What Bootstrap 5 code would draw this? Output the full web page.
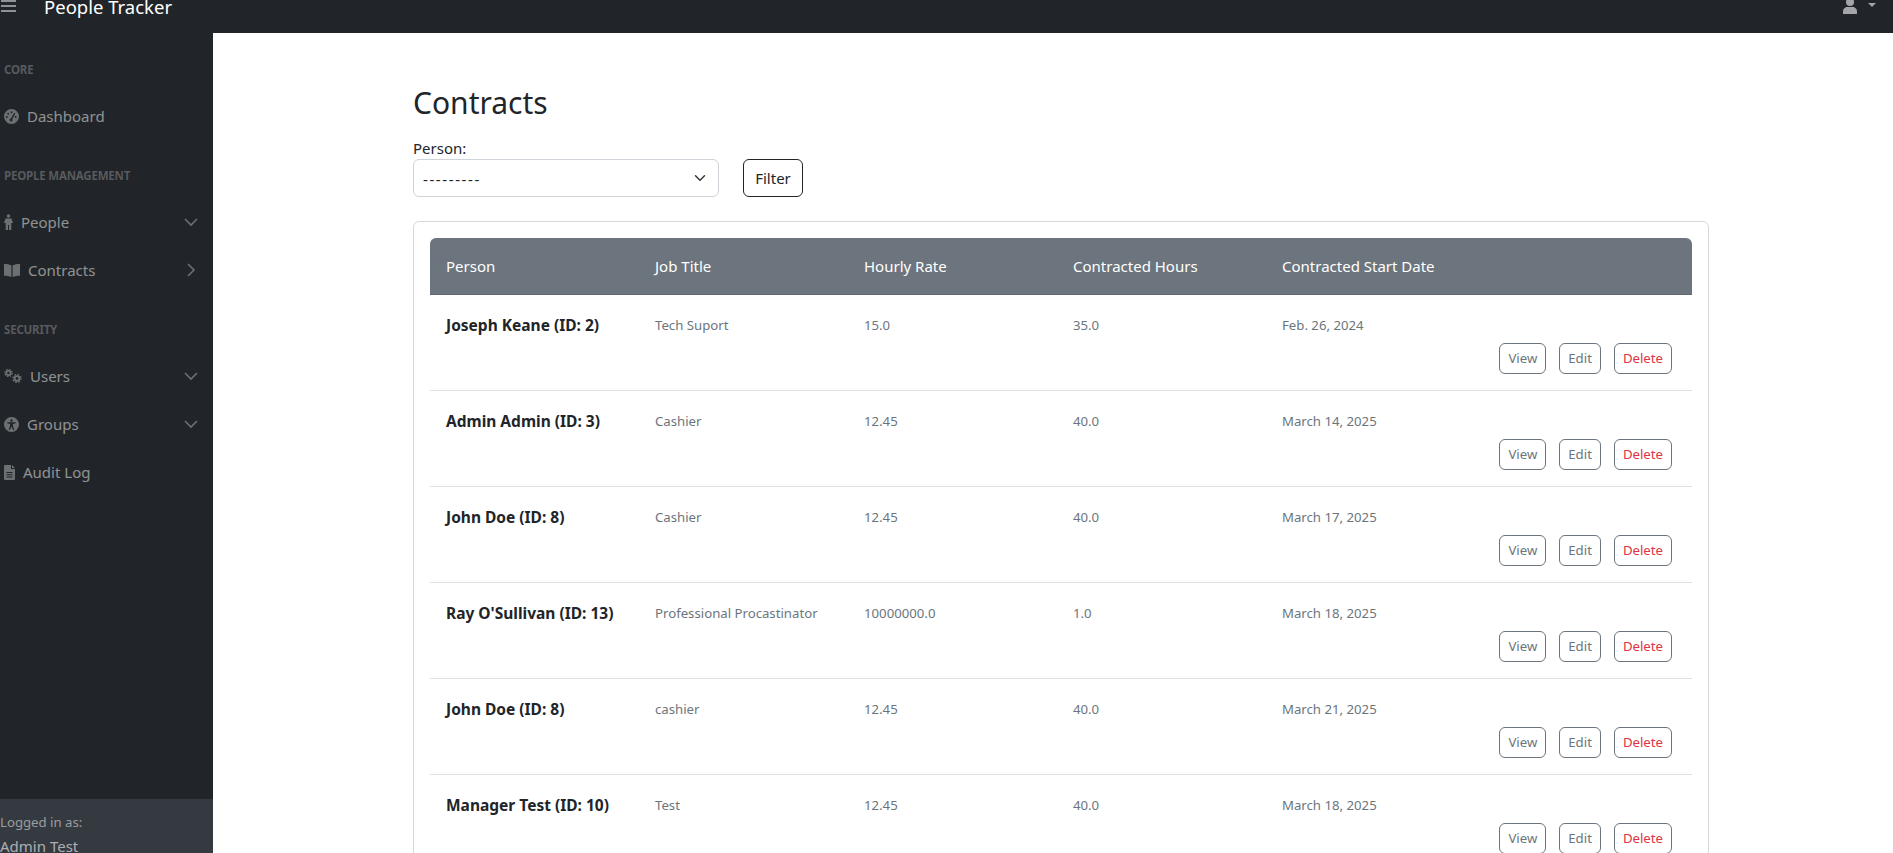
<!DOCTYPE html>
<html lang="en">
  <head>
    <meta charset="UTF-8" />
    <meta name="viewport" content="width=device-width, initial-scale=1.0" />
    <link href="https://cdn.jsdelivr.net/npm/bootstrap@5.3.2/dist/css/bootstrap.min.css" rel="stylesheet" />
    <title>Contracts</title>
    <style>
      html, body { height: 100%; overflow: hidden; }
      body { font-family: "Noto Sans", "Open Sans", sans-serif; font-size: 15px; color: #212529; background: #fff; }
      .top-bar { height: 33px; background: #212529; padding: 0; align-items: flex-start; flex-wrap: nowrap; }
      .burger { width: 15px; margin: 0 0 0 1px; display: flex; flex-direction: column; gap: 3px; padding-top: 0; }
      .burger span { display: block; height: 2px; background: #8f9296; }
      .brand { color: #fff; font-size: 18.5px; line-height: 22px; margin: -4px 0 0 28px; }
      .user-menu { margin: 0 17px 0 auto; gap: 11px; }
      .user-caret { width: 0; height: 0; border-top: 4.5px solid #a3a5a8; border-left: 4.5px solid transparent; border-right: 4.5px solid transparent; margin-top: 3px; }
      .shell { height: calc(100vh - 33px); }
      .side { width: 213px; flex: none; background: #212529; }
      .side-nav { padding-top: 1px; }
      .side-head { font-size: 11.5px; font-weight: 700; color: rgba(255,255,255,.25); text-transform: uppercase; padding: 0 4px; line-height: 16px; letter-spacing: -.2px; margin: 28px 0 14px; }
      .side-item { color: rgba(255,255,255,.5); height: 48px; padding: 0 15px 0 4px; font-size: 15px; text-decoration: none; gap: 8px; }
      .side-item svg.ic { fill: #6d7073; flex: none; }
      .side-item svg.chev { margin-left: auto; stroke: #6d7073; fill: none; stroke-width: 1.6; flex: none; }
      .side-foot { background: #343a40; color: rgba(255,255,255,.5); height: 54px; padding: 12px 0 0 0; font-size: 13.2px; line-height: 22px; }
      .side-foot div + div { font-size: 15px; line-height: 14px; margin-top: 6px; color: rgba(255,255,255,.6); }
      .main-area { min-width: 0; padding: 0 184px 0 200px; overflow: hidden; }
      .page-title { font-size: 30px; font-weight: 400; line-height: 38px; margin: 51px 0 16px; }
      .filter-label { display: block; font-size: 15px; line-height: 20px; margin-bottom: 1px; color: #212529; }
      .filter-select { width: 306px; height: 38px; font-size: 15px; padding: 7px 9px 5px; border-color: #ced4da; background-position: right 10px center; color: #212529; letter-spacing: 1.6px; }
      .filter-btn { height: 38px; width: 60px; font-size: 15px; padding: 1px 0 0; border-color: #212529; color: #212529; margin-left: 24px; }
      .list-card { margin-top: 24px; padding: 16px 16px 0; border-color: #d5d7d9; border-radius: 6px; }
      .contract-table { table-layout: fixed; margin: 0; width: 100%; }
      .contract-table thead th { background: #6c757d; color: #fff; font-weight: 400; font-size: 15px; height: 56px; padding: 1px 16px 0; vertical-align: middle; border-bottom: 1px solid #5f676e; width: 209px; }
      .contract-table thead th:first-child { border-top-left-radius: 6px; }
      .contract-table thead th:last-child { border-top-right-radius: 6px; width: auto; }
      .contract-table td { height: 96px; padding: 19px 16px 0; vertical-align: top; font-size: 13.2px; line-height: 22px; color: #6c757d; border-bottom: 1px solid #dee2e6; }
      .contract-table td.who { font-weight: 700; font-size: 15.5px; padding-right: 0; color: #212529; white-space: nowrap; }
      .contract-table td.acts { padding: 48px 20px 0 0; }
      .row-actions { gap: 13px; }
      .row-btn { height: 31px; font-size: 13.2px; padding: 0 8px; border-color: #6c757d; color: #6c757d; line-height: 29px; }
      .row-btn.del { color: #dc3545; }
    </style>
  </head>

  <body>
    <nav class="navbar top-bar d-flex">
      <div class="burger"><span></span><span></span><span></span></div>
      <a class="brand text-decoration-none" href="#">People Tracker</a>
      <div class="user-menu d-flex">
        <svg width="14" height="14" viewBox="0 0 14 14" fill="#a3a5a8"><circle cx="7" cy="2" r="4"/><path d="M0 14v-2.500c0-3 2.500-4.500 4-4.500h6c1.500 0 4 1.500 4 4.500V14z"/></svg>
        <span class="user-caret"></span>
      </div>
    </nav>

    <div class="shell d-flex">
      <aside class="side d-flex flex-column">
        <div class="side-nav flex-grow-1">
          <div class="side-head">Core</div>
          <a class="side-item d-flex align-items-center" href="#">
            <svg class="ic" width="15" height="15" viewBox="0 0 16 16"><path fill-rule="evenodd" d="M8 0a8 8 0 1 1 0 16A8 8 0 0 1 8 0zM8 2.500a1 1 0 1 0 0 2 1 1 0 0 0 0-2zM4.500 4a1 1 0 1 0 0 2 1 1 0 0 0 0-2zM3 7.500a1 1 0 1 0 0 2 1 1 0 0 0 0-2zM12.500 7.500a1 1 0 1 0 0 2 1 1 0 0 0 0-2zM11 4l-3.700 6a1.600 1.600 0 1 0 1.500.6L12 5z"/></svg>
            Dashboard
          </a>
          <div class="side-head">People Management</div>
          <a class="side-item d-flex align-items-center" href="#">
            <svg class="ic" width="9" height="16" viewBox="0 0 9 16"><circle cx="4.500" cy="2" r="1.800"/><path d="M1.500 4.500h6L9 9H7.300v7H5V11H4v5H1.700V9H0z"/></svg>
            People
            <svg class="chev" width="14" height="14" viewBox="0 0 14 14"><path d="M1 4l6 6 6-6"/></svg>
          </a>
          <a class="side-item d-flex align-items-center" href="#">
            <svg class="ic" width="16" height="13" viewBox="0 0 16 13"><path d="M0 0c3 0 5 .3 7.400 1.500V13C5 12 3 11.700 0 11.700zM16 0c-3 0-5 .3-7.400 1.500V13c2.400-1 4.400-1.300 7.400-1.300z"/></svg>
            Contracts
            <svg class="chev" width="14" height="14" viewBox="0 0 14 14"><path d="M4 1l6 6-6 6"/></svg>
          </a>
          <div class="side-head">Security</div>
          <a class="side-item d-flex align-items-center" href="#">
            <svg class="ic" width="18" height="14" viewBox="0 0 18 14">
              <circle cx="4.500" cy="4" r="2.200" fill="none" stroke="#6d7073" stroke-width="1.700"/>
              <circle cx="4.500" cy="4" r="3.600" fill="none" stroke="#6d7073" stroke-width="1.300" stroke-dasharray="1.500 1.330"/>
              <circle cx="13" cy="9.500" r="2.400" fill="none" stroke="#6d7073" stroke-width="1.900"/>
              <circle cx="13" cy="9.500" r="4" fill="none" stroke="#6d7073" stroke-width="1.400" stroke-dasharray="1.600 1.540"/>
            </svg>
            Users
            <svg class="chev" width="14" height="14" viewBox="0 0 14 14"><path d="M1 4l6 6 6-6"/></svg>
          </a>
          <a class="side-item d-flex align-items-center" href="#">
            <svg class="ic" width="15" height="15" viewBox="0 0 16 16"><path fill-rule="evenodd" d="M8 0a8 8 0 1 1 0 16A8 8 0 0 1 8 0zM8 2.500a1.300 1.300 0 1 0 0 2.600 1.300 1.300 0 0 0 0-2.600zM3.500 5.500v1.200l3 .7v2L5 13.500l1.200.4L8 10.200l1.800 3.700 1.200-.4-1.500-4.100v-2l3-.7V5.500z"/></svg>
            Groups
            <svg class="chev" width="14" height="14" viewBox="0 0 14 14"><path d="M1 4l6 6 6-6"/></svg>
          </a>
          <a class="side-item d-flex align-items-center" href="#">
            <svg class="ic" width="11" height="15" viewBox="0 0 11 15"><path fill-rule="evenodd" d="M1 0h6v4h4v10a1 1 0 0 1-1 1H1a1 1 0 0 1-1-1V1a1 1 0 0 1 1-1zM8 0l3 3H8zM2.500 7v1h6V7zM2.500 9.300v1h6v-1zM2.500 11.600v1h6v-1z"/></svg>
            Audit Log
          </a>
        </div>
        <div class="side-foot">
          <div>Logged in as:</div>
          <div>Admin Test</div>
        </div>
      </aside>

      <main class="main-area flex-grow-1">
        <h1 class="page-title">Contracts</h1>
        <form class="d-flex align-items-end">
          <div>
            <label class="filter-label" for="personFilter">Person:</label>
            <select class="form-select filter-select" id="personFilter"><option>---------</option></select>
          </div>
          <button class="btn filter-btn" type="button">Filter</button>
        </form>

        <div class="card list-card">
          <table class="table contract-table">
            <thead>
              <tr><th>Person</th><th>Job Title</th><th>Hourly Rate</th><th>Contracted Hours</th><th>Contracted Start Date</th><th></th></tr>
            </thead>
            <tbody id="tbody"></tbody>
          </table>
        </div>
      </main>
    </div>

    <script src="https://cdn.jsdelivr.net/npm/bootstrap@5.3.2/dist/js/bootstrap.bundle.min.js"></script>
    <script>
      const contracts = [
        ["Joseph Keane (ID: 2)", "Tech Suport", "15.0", "35.0", "Feb. 26, 2024"],
        ["Admin Admin (ID: 3)", "Cashier", "12.45", "40.0", "March 14, 2025"],
        ["John Doe (ID: 8)", "Cashier", "12.45", "40.0", "March 17, 2025"],
        ["Ray O'Sullivan (ID: 13)", "Professional Procastinator", "10000000.0", "1.0", "March 18, 2025"],
        ["John Doe (ID: 8)", "cashier", "12.45", "40.0", "March 21, 2025"],
        ["Manager Test (ID: 10)", "Test", "12.45", "40.0", "March 18, 2025"],
      ];
      let tableData = "";
      contracts.map((values) => {
        tableData += `<tr><td class="who">${values[0]}</td>
          <td>${values[1]}</td>
          <td>${values[2]}</td>
          <td>${values[3]}</td>
          <td>${values[4]}</td>
          <td class="acts"><div class="d-flex justify-content-end row-actions">
            <button class="btn row-btn">View</button>
            <button class="btn row-btn">Edit</button>
            <button class="btn row-btn del">Delete</button>
          </div></td></tr>`;
      });
      document.getElementById("tbody").innerHTML = tableData;
    </script>
  </body>
</html>
